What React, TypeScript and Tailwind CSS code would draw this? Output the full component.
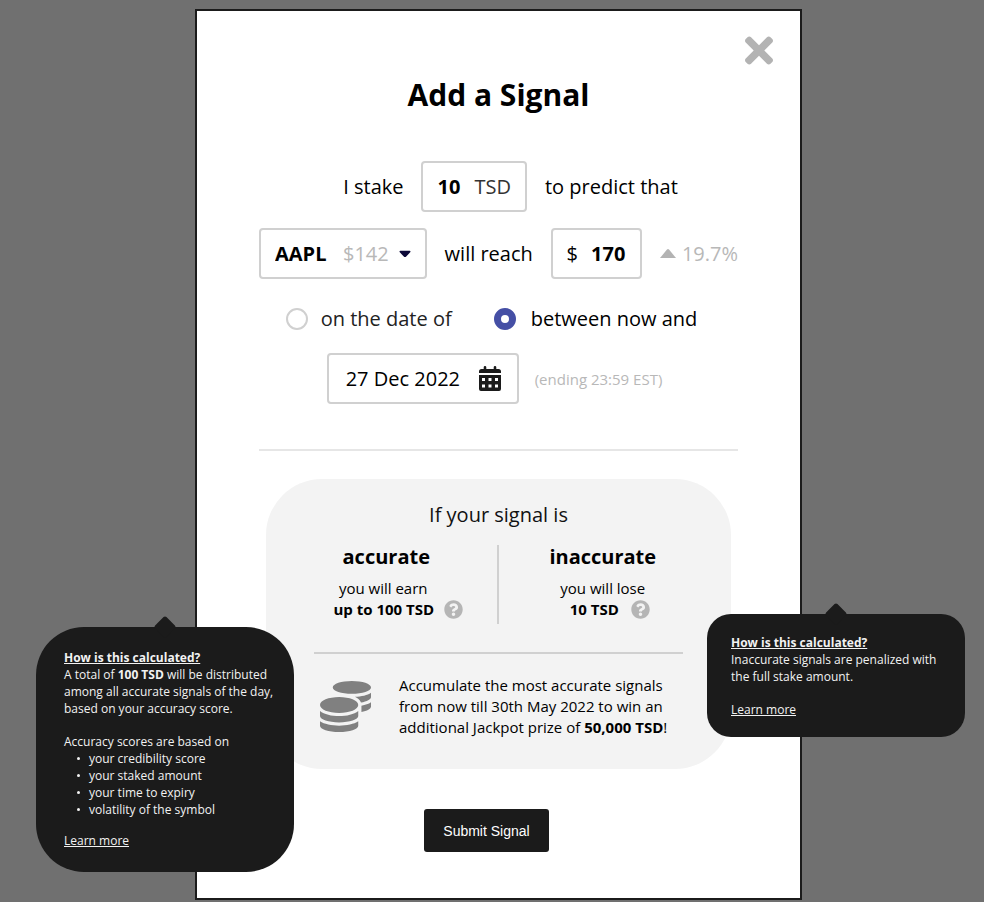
import { useState } from "react";
import type { ReactNode } from "react";
import { FaCoins, FaQuestionCircle, FaTimes } from "react-icons/fa";

const field =
  "flex h-[51px] items-center rounded-[4px] border-2 border-[#d0d0d0] bg-white px-[14px]";

const radio =
  "size-[22px] appearance-none rounded-full border-2 border-[#d0d0d0] checked:border-[7px] checked:border-[#454fa5]";

function Tooltip({ className, children }: { className: string; children: ReactNode }) {
  return (
    <div
      role="tooltip"
      className={`absolute w-[258px] bg-[#1b1b1b] text-[12px] leading-[17px] whitespace-nowrap text-[#f2f2f2] ${className}`}
    >
      <span className="absolute -top-2 left-1/2 size-4 -translate-x-1/2 rotate-45 rounded-[2px] bg-[#1b1b1b]" />
      <div className="relative">
        <h3 className="font-bold underline">How is this calculated?</h3>
        {children}
      </div>
    </div>
  );
}

function HelpButton({ label }: { label: string }) {
  return (
    <button type="button" aria-label={label} className="text-[#b5b5b5]">
      <FaQuestionCircle className="size-[19px]" />
    </button>
  );
}

function CalendarIcon() {
  return (
    <svg viewBox="0 0 22 25" className="h-[25px] w-[22px]" fill="currentColor">
      <path d="M0 7V5.500Q0 3 2.500 3H4.700V1.200Q4.700 0 6 0T7.300 1.200V3H14.700V1.200Q14.700 0 16 0T17.300 1.200V3H19.500Q22 3 22 5.500V7Z" />
      <path
        fillRule="evenodd"
        d="M0 9H22V23Q22 25 20 25H2Q0 25 0 23ZM3 12V15H6V12ZM9.500 12V15H12.500V12ZM16 12V15H19V12ZM3 18.500V21.500H6V18.500ZM9.500 18.500V21.500H12.500V18.500ZM16 18.500V21.500H19V18.500Z"
      />
    </svg>
  );
}

export default function App() {
  const [mode, setMode] = useState("between");

  return (
    <div className="flex min-h-screen items-start justify-center bg-[#707070] pt-[9px] pb-[2px] pl-[13px] font-['Open_Sans','Noto_Sans',sans-serif] text-black">
      <main className="relative w-full max-w-[607px] border-2 border-[#1b1b1b] bg-white px-[62px] pt-[25px] pb-[46px]">
        <div className="-mr-[35px] flex justify-end">
          <button
            type="button"
            aria-label="Close"
            className="flex size-7 items-center justify-center text-[#b3b3b3]"
          >
            <FaTimes className="h-[41px] w-7 shrink-0" />
          </button>
        </div>
        <h1 className="mt-[13px] text-center text-[30px] leading-9 font-bold">Add a Signal</h1>

        <form className="text-[20px] leading-7" onSubmit={(e) => e.preventDefault()}>
          <div className="mt-12 flex items-center justify-center gap-[18px] pl-6">
            <label htmlFor="stake">I stake</label>
            <div className={`${field} gap-[13px]`}>
              <input
                id="stake"
                defaultValue="10"
                className="w-6 bg-transparent font-bold outline-none"
              />
              <span className="text-[#333]">TSD</span>
            </div>
            <span>to predict that</span>
          </div>

          <div className="mt-4 flex items-center justify-between">
            <div className={field}>
              <select
                aria-label="Symbol"
                className="w-[52px] appearance-none bg-transparent font-bold outline-none"
              >
                <option>AAPL</option>
              </select>
              <span className="ml-4 text-[#b8b8b8]">$142</span>
              <svg viewBox="0 0 12 8" className="ml-[10px] h-2 w-3" fill="#0b0838">
                <path d="M1.4.8h9.2c.9 0 1.2.9.6 1.500L7.200 6.600c-.7.700-1.700.700-2.400 0L.8 2.300C.2 1.700.5.800 1.400.8Z" />
              </svg>
            </div>
            <label htmlFor="target">will reach</label>
            <div className={`${field} gap-[13px]`}>
              <span>$</span>
              <input
                id="target"
                defaultValue="170"
                className="w-[35px] bg-transparent font-bold outline-none"
              />
            </div>
            <span className="flex items-center gap-[6px] text-[#b8b8b8]">
              <svg viewBox="0 0 16 9" className="h-[9px] w-4" fill="#b3b3b3">
                <path d="M0 9 7 .6Q8-.4 9 .6L16 9Z" />
              </svg>
              19.7%
            </span>
          </div>

          <div className="mt-[26px] flex items-center justify-center gap-[42px] pr-[14px]">
            <label className="flex items-center gap-[13px] text-[#222]">
              <input
                type="radio"
                name="mode"
                checked={mode === "date"}
                onChange={() => setMode("date")}
                className={radio}
              />
              on the date of
            </label>
            <label className="flex items-center gap-[15px]">
              <input
                type="radio"
                name="mode"
                checked={mode === "between"}
                onChange={() => setMode("between")}
                className={radio}
              />
              between now and
            </label>
          </div>

          <div className="mt-5 flex items-center justify-center gap-4 pr-2">
            <div className={`${field} gap-4`}>
              <input
                aria-label="Date"
                defaultValue="27 Dec 2022"
                className="ml-[3px] w-[117px] bg-transparent outline-none"
              />
              <button type="button" aria-label="Open calendar" className="mr-[2px] text-[#1b1b1b]">
                <CalendarIcon />
              </button>
            </div>
            <span className="text-[15px] text-[#b8b8b8]">(ending 23:59 EST)</span>
          </div>

          <hr className="mt-[45px] border-t-2 border-[#e6e6e6]" />

          <section className="mx-[7px] mt-7 rounded-[56px] bg-[#f3f3f3] px-12 pt-[22px] pb-[31px]">
            <h2 className="text-center text-[#111]">If your signal is</h2>
            <div className="mt-4 grid grid-cols-2 text-center text-[15px] leading-[21px]">
              <div className="border-r-2 border-[#d0d0d0] pr-[38px] pb-1">
                <h3 className="text-[20px] leading-6 font-bold">accurate</h3>
                <p className="mt-[9px] pr-[6px]">you will earn</p>
                <p className="-mr-6 flex items-center justify-center gap-[10px] font-bold">
                  up to 100 TSD
                  <HelpButton label="How earnings are calculated" />
                </p>
              </div>
              <div className="pb-1 pl-6">
                <h3 className="text-[20px] leading-6 font-bold">inaccurate</h3>
                <p className="mt-[9px]">you will lose</p>
                <p className="flex items-center justify-center gap-3 pl-[14px] font-bold">
                  10 TSD
                  <HelpButton label="How losses are calculated" />
                </p>
              </div>
            </div>
            <hr className="mt-7 border-t-2 border-[#d0d0d0]" />
            <div className="mt-[21px] flex items-center gap-7 pl-[6px] text-[15px] leading-[21px]">
              <FaCoins className="size-[51px] shrink-0 text-[#808080]" />
              <p className="-mr-4">
                Accumulate the most accurate signals
                <br />
                from now till 30th May 2022 to win an
                <br />
                additional Jackpot prize of <b>50,000 TSD</b>!
              </p>
            </div>
          </section>

          <div className="mt-10 flex justify-center pr-6">
            <button
              type="submit"
              className="h-[43px] w-[125px] rounded-[3px] bg-[#1b1b1b] font-['Liberation_Sans',Arial,sans-serif] text-[14px] text-white"
            >
              Submit Signal
            </button>
          </div>
        </form>

        <Tooltip className="top-[616px] right-[506px] rounded-[48px] px-7 pt-[22px] pb-[23px]">
          <p>
            A total of <b>100 TSD</b> will be distributed
            <br />
            among all accurate signals of the day,
            <br />
            based on your accuracy score.
          </p>
          <p className="mt-4">Accuracy scores are based on</p>
          <ul>
            {[
              "your credibility score",
              "your staked amount",
              "your time to expiry",
              "volatility of the symbol",
            ].map((item) => (
              <li key={item} className="flex items-center gap-[9px] pl-[13px]">
                <span className="size-[3px] rounded-full bg-[#f2f2f2]" />
                {item}
              </li>
            ))}
          </ul>
          <a href="#earnings" className="mt-[14px] block w-fit underline">
            Learn more
          </a>
        </Tooltip>

        <Tooltip className="top-[603px] left-[510px] rounded-[24px] px-6 pt-5 pb-[19px]">
          <p>
            Inaccurate signals are penalized with
            <br />
            the full stake amount.
          </p>
          <a href="#losses" className="mt-4 block w-fit underline">
            Learn more
          </a>
        </Tooltip>
      </main>
    </div>
  );
}
